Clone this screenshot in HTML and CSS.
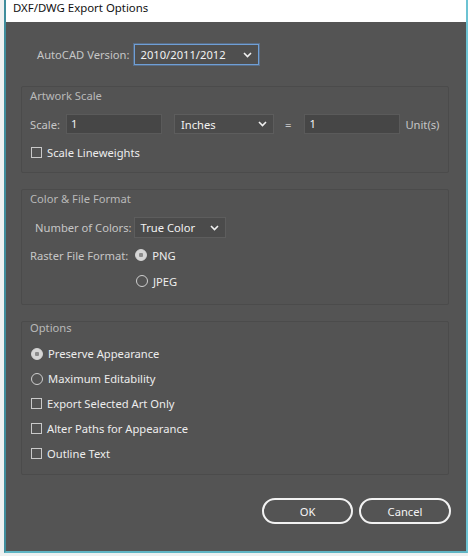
FILE: index.html
```html
<!DOCTYPE html>
<html>
<head>
<meta charset="utf-8">
<title>DXF/DWG Export Options</title>
<link rel="stylesheet" href="styles.css">
</head>
<body>
<div class="window">
  <div class="titlebar">DXF/DWG Export Options</div>
  <div class="content">
    <div class="row version-row">
      <span class="label">AutoCAD Version:</span>
      <div class="select focused w-version"><span class="value">2010/2011/2012</span><svg class="chev" width="9" height="6" viewBox="0 0 9 6"><polyline points="1,1 4.5,4.5 8,1" fill="none" stroke="#f0f0f0" stroke-width="1.6"/></svg></div>
    </div>

    <div class="group g-scale">
      <div class="group-title">Artwork Scale</div>
      <div class="row scale-row">
        <span class="label">Scale:</span>
        <div class="input w-num first-input">1</div>
        <div class="select w-units"><span class="value">Inches</span><svg class="chev" width="9" height="6" viewBox="0 0 9 6"><polyline points="1,1 4.5,4.5 8,1" fill="none" stroke="#f0f0f0" stroke-width="1.6"/></svg></div>
        <span class="label eq">=</span>
        <div class="input w-num">1</div>
        <span class="label units">Unit(s)</span>
      </div>
      <div class="row opt lineweights"><span class="box"></span><span class="text">Scale Lineweights</span></div>
    </div>

    <div class="group g-color">
      <div class="group-title">Color &amp; File Format</div>
      <div class="row colors-row">
        <span class="label">Number of Colors:</span>
        <div class="select w-colors"><span class="value">True Color</span><svg class="chev" width="9" height="6" viewBox="0 0 9 6"><polyline points="1,1 4.5,4.5 8,1" fill="none" stroke="#f0f0f0" stroke-width="1.6"/></svg></div>
      </div>
      <div class="row raster-row">
        <span class="label">Raster File Format:</span>
        <span class="radio on"></span><span class="text">PNG</span>
      </div>
      <div class="row opt jpeg-row"><span class="radio"></span><span class="text">JPEG</span></div>
    </div>

    <div class="group g-options">
      <div class="group-title">Options</div>
      <div class="row opt"><span class="radio on"></span><span class="text">Preserve Appearance</span></div>
      <div class="row opt"><span class="radio"></span><span class="text">Maximum Editability</span></div>
      <div class="row opt"><span class="box"></span><span class="text">Export Selected Art Only</span></div>
      <div class="row opt"><span class="box"></span><span class="text">Alter Paths for Appearance</span></div>
      <div class="row opt"><span class="box"></span><span class="text">Outline Text</span></div>
    </div>

    <div class="buttons">
      <div class="btn btn-ok">OK</div>
      <div class="btn btn-cancel">Cancel</div>
    </div>
  </div>
</div>
</body>
</html>
```

FILE: styles.css
```css
html, body {
  margin: 0;
  padding: 0;
}
body {
  background: #eef0f0;
  width: 468px;
  height: 556px;
  overflow: hidden;
  font-family: "Noto Sans", "Open Sans", sans-serif;
  font-size: 11.2px;
}
.window {
  margin-left: 4px;
  width: 460px;
  height: 551px;
  border-left: 2px solid #3f8d9c;
  border-right: 2px solid #6cc3d3;
  border-bottom: 2px solid #5fb4c3;
  display: flex;
  flex-direction: column;
}
.titlebar {
  height: 22px;
  background: #ffffff;
  color: #111;
  font-size: 11.4px;
  line-height: 15px;
  padding-left: 7px;
  box-sizing: border-box;
}
.content {
  flex: 1;
  background: #545454;
  display: flex;
  flex-direction: column;
  padding: 22px 15px 0 15px;
}
.row {
  display: flex;
  align-items: center;
}
.label {
  color: #c6c6c6;
  white-space: nowrap;
}
.text {
  color: #ededed;
  white-space: nowrap;
}
.value {
  color: #f2f2f2;
}
.version-row {
  height: 21px;
  padding-left: 16px;
}
.version-row .label {
  margin-right: 4px;
}
.select {
  box-sizing: border-box;
  height: 21px;
  background: #4b4b4b;
  border: 1px solid #5d5d5d;
  display: flex;
  align-items: center;
  justify-content: space-between;
  padding: 0 6px 0 6px;
}
.select.focused {
  border: 1px solid #6f9fd6;
  box-shadow: 0 0 0 1px rgba(95, 140, 195, 0.45);
  background: #4f4f4f;
}
.w-version { width: 125px; }
.w-units { width: 100px; height: 20px; margin-left: 12px; }
.w-colors { width: 92px; margin-left: 2px; flex: none; }
.chev { display: block; }
.input {
  box-sizing: border-box;
  height: 20px;
  background: #464646;
  border: 1px solid #5a5a5a;
  color: #f2f2f2;
  padding-left: 4px;
  line-height: 18px;
}
.w-num { width: 96px; }
.first-input { margin-left: 6px; }
.eq { margin: 0 13px 0 11px; }
.units { margin-left: 5px; }

.group {
  box-sizing: border-box;
  width: 428px;
  border: 1px solid #4b4b4b;
  border-radius: 2px;
  background: #535353;
  padding: 0 8px;
  display: flex;
  flex-direction: column;
}
.group-title {
  color: #b9b9b9;
  height: 16px;
  line-height: 16px;
}
.g-scale {
  margin-top: 21px;
  height: 87px;
  padding-top: 1px;
}
.scale-row {
  margin-top: 10px;
  height: 20px;
}
.lineweights {
  margin-top: 8px;
}
.opt {
  height: 20px;
  padding-left: 1px;
}
.g-color {
  margin-top: 16px;
  height: 116px;
  padding-top: 1px;
}
.colors-row {
  margin-top: 10px;
  height: 21px;
  padding-left: 5px;
}
.raster-row {
  margin-top: 7px;
  height: 20px;
}
.raster-row .radio {
  margin-left: 7px;
}
.jpeg-row {
  margin-top: 6px;
  padding-left: 106px;
}
.g-options {
  margin-top: 16px;
  height: 154px;
  padding-top: 0;
}
.g-options .group-title {
  margin-top: -2px;
}
.g-options .opt {
  height: 25px;
}
.g-options .group-title + .opt {
  margin-top: 5px;
}
.box {
  box-sizing: border-box;
  width: 11px;
  height: 11px;
  border: 1px solid #c9c9c9;
  margin-right: 5px;
  flex: none;
}
.radio {
  box-sizing: border-box;
  width: 12px;
  height: 12px;
  border: 1px solid #cfcfcf;
  border-radius: 50%;
  margin-right: 5px;
  flex: none;
}
.radio.on {
  background: radial-gradient(circle, #8c8c8c 0 2px, #d6d6d6 2.5px);
  border-color: #d6d6d6;
}
.buttons {
  display: flex;
  justify-content: flex-end;
  margin-top: 23px;
  gap: 6px;
}
.btn {
  box-sizing: border-box;
  height: 26px;
  border: 2px solid #f2f2f2;
  border-radius: 13px;
  color: #f5f5f5;
  display: flex;
  align-items: center;
  justify-content: center;
}
.btn-ok { width: 91px; }
.btn-cancel { width: 92px; }
```
